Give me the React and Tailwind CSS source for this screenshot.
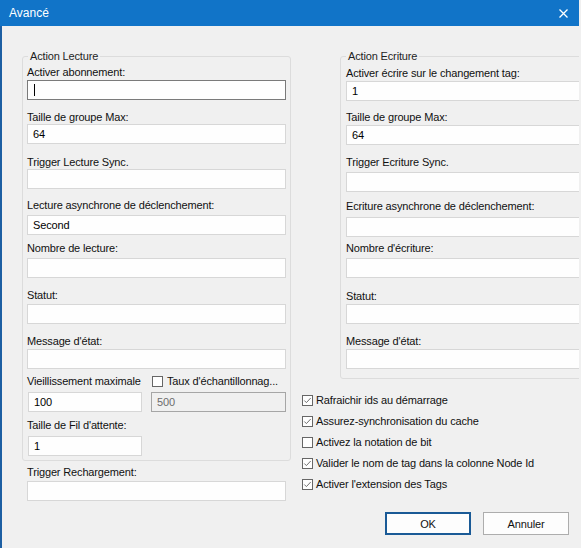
import React from "react";

function Label({ text, cls }) {
  return (
    <div className={"h-[14px] leading-[14px] whitespace-nowrap " + cls}>{text}</div>
  );
}

function Input({ value, cls, focused, disabled }) {
  let border = "border-[#d7d7d7] bg-[#fefefe] text-black";
  if (focused) border = "border-[#7a7a7a] bg-[#fefefe] text-black";
  if (disabled) border = "border-[#a6a6a6] bg-[#f0f0f0] text-[#6d6d6d]";
  return (
    <div className={"h-[20px] border flex items-center pl-[5px] leading-[14px] " + border + " " + cls}>
      {focused ? <span className="w-[1px] h-[12px] bg-black ml-[1px]" /> : value}
    </div>
  );
}

function Check({ checked }) {
  return (
    <div className="w-[11px] h-[11px] border border-[#666666] bg-[#fefefe] flex items-center justify-center shrink-0">
      {checked && (
        <svg width="9" height="9" viewBox="0 0 9 9">
          <polyline points="1.3,4.5 3.4,6.6 7.7,2.0" fill="none" stroke="#707070" strokeWidth="1" />
        </svg>
      )}
    </div>
  );
}

function CheckRow({ checked, text }) {
  return (
    <div className="h-[21px] flex items-center">
      <Check checked={checked} />
      <span className="ml-[3px] whitespace-nowrap">{text}</span>
    </div>
  );
}

export default function App() {
  return (
    <div className="w-[581px] h-[548px] bg-[#f0f0f0] overflow-hidden font-['Liberation_Sans',Arial,sans-serif] text-[11px] tracking-[-0.15px] text-[#111111]">
      <div className="w-[579px] h-[548px] flex flex-col overflow-hidden">
        <div className="h-[26px] shrink-0 bg-[#1174c8] flex items-center justify-between pl-[9px] pr-[11px] text-white text-[12px] tracking-normal">
          <span>Avancé</span>
          <svg width="9" height="9" viewBox="0 0 9 9">
            <path d="M0.5 0.5 L8.5 8.5 M8.5 0.5 L0.5 8.5" stroke="white" strokeWidth="1.3" />
          </svg>
        </div>
        <div className="flex-1 flex border-l-2 border-[#1d5fa3] bg-[#f0f0f0]">
          {/* Left column */}
          <div className="ml-[20px] w-[269px] shrink-0 pt-[23px] flex flex-col">
            <fieldset className="border border-[#dcdcdc] rounded-[3px] pl-[4px] pr-[4px] pb-[4px] flex flex-col">
              <legend className="ml-[1px] px-[2px] h-[14px] leading-[14px] text-[#1e1e1e]">Action Lecture</legend>
              <Label text="Activer abonnement:" cls="mt-[2px]" />
              <Input focused cls="mt-[1px]" />
              <Label text="Taille de groupe Max:" cls="mt-[10px]" />
              <Input value="64" cls="mt-[0px]" />
              <Label text="Trigger Lecture Sync." cls="mt-[11px]" />
              <Input cls="mt-[0px]" />
              <Label text="Lecture asynchrone de déclenchement:" cls="mt-[9px]" />
              <Input value="Second" cls="mt-[3px]" />
              <Label text="Nombre de lecture:" cls="mt-[6px]" />
              <Input cls="mt-[3px]" />
              <Label text="Statut:" cls="mt-[10px]" />
              <Input cls="mt-[2px]" />
              <Label text="Message d'état:" cls="mt-[10px]" />
              <Input cls="mt-[1px]" />
              <div className="mt-[5px] h-[14px] flex items-center">
                <span className="w-[125px] whitespace-nowrap">Vieillissement maximale</span>
                <Check />
                <span className="ml-[4px] whitespace-nowrap">Taux d'échantillonnag...</span>
              </div>
              <div className="mt-[4px] flex">
                <Input value="100" cls="ml-[1px] w-[114px]" />
                <Input value="500" disabled cls="ml-[9px] w-[135px]" />
              </div>
              <Label text="Taille de Fil d'attente:" cls="mt-[6px]" />
              <Input value="1" cls="mt-[4px] ml-[1px] w-[114px]" />
            </fieldset>
            <div className="px-[5px] flex flex-col">
              <Label text="Trigger Rechargement:" cls="mt-[4px]" />
              <Input cls="mt-[2px]" />
            </div>
          </div>
          {/* Right column */}
          <div className="ml-[11px] flex-1 min-w-0 pt-[23px] flex flex-col">
            <fieldset className="ml-[38px] w-[260px] shrink-0 border border-[#dcdcdc] rounded-[3px] pl-[5px] pr-[4px] pb-[9px] flex flex-col">
              <legend className="px-[2px] h-[14px] leading-[14px] text-[#1e1e1e]">Action Ecriture</legend>
              <Label text="Activer écrire sur le changement tag:" cls="mt-[3px]" />
              <Input value="1" cls="mt-[1px]" />
              <Label text="Taille de groupe Max:" cls="mt-[9px]" />
              <Input value="64" cls="mt-[1px]" />
              <Label text="Trigger Ecriture Sync." cls="mt-[10px]" />
              <Input cls="mt-[3px]" />
              <Label text="Ecriture asynchrone de déclenchement:" cls="mt-[7px]" />
              <Input cls="mt-[4px]" />
              <Label text="Nombre d'écriture:" cls="mt-[4px]" />
              <Input cls="mt-[3px]" />
              <Label text="Statut:" cls="mt-[11px]" />
              <Input cls="mt-[1px]" />
              <Label text="Message d'état:" cls="mt-[10px]" />
              <Input cls="mt-[1px]" />
            </fieldset>
            <div className="mt-[11px] flex flex-col">
              <CheckRow checked text="Rafraichir ids au démarrage" />
              <CheckRow checked text="Assurez-synchronisation du cache" />
              <CheckRow text="Activez la notation de bit" />
              <CheckRow checked text="Valider le nom de tag dans la colonne Node Id" />
              <CheckRow checked text="Activer l'extension des Tags" />
            </div>
            <div className="mt-[17px] flex justify-end gap-[12px] pr-[10px]">
              <button className="w-[86px] h-[23px] border-2 border-[#1a5a96] bg-[#fdfdfd] text-[11px] leading-[14px]">OK</button>
              <button className="w-[86px] h-[23px] border border-[#adadad] bg-[#fdfdfd] text-[11px] leading-[14px]">Annuler</button>
            </div>
          </div>
        </div>
      </div>
    </div>
  );
}
